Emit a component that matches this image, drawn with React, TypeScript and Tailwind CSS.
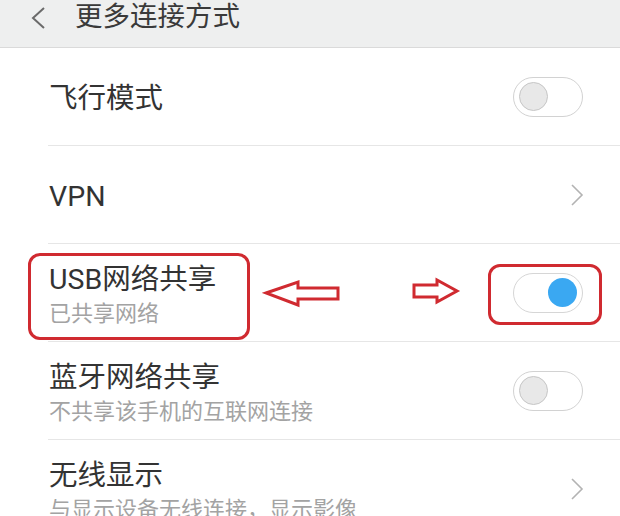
import React from 'react';

type Row = {
  title: string;
  subtitle?: string;
  kind: 'toggle' | 'arrow';
  on?: boolean;
};

const rows: Row[] = [
  { title: '飞行模式', kind: 'toggle' },
  { title: 'VPN', kind: 'arrow' },
  { title: 'USB网络共享', subtitle: '已共享网络', kind: 'toggle', on: true },
  { title: '蓝牙网络共享', subtitle: '不共享该手机的互联网连接', kind: 'toggle' },
  { title: '无线显示', subtitle: '与显示设备无线连接，显示影像', kind: 'arrow' },
];

const Toggle: React.FC<{ on?: boolean }> = ({ on }) => (
  <div
    className={`w-[70px] h-[40px] rounded-full border-[1.5px] bg-white flex items-center px-[5px] ${
      on ? 'border-[#d6d6d6] justify-end' : 'border-[#d2d2d2] justify-start'
    }`}
  >
    {on ? (
      <div className="w-[29px] h-[29px] rounded-full bg-[#3aa8f2]" />
    ) : (
      <div className="w-[29px] h-[29px] rounded-full bg-[#e8e8e8] border border-[#c6c6c6]" />
    )}
  </div>
);

const Chevron: React.FC = () => (
  <svg width="14" height="24" viewBox="0 0 14 24" className="mr-[-1px]">
    <polyline points="2,2 12,12 2,22" fill="none" stroke="#b3b3b3" strokeWidth="1.6" />
  </svg>
);

export default function App() {
  return (
    <div
      className="relative w-[620px] h-[516px] overflow-hidden bg-white"
      style={{ fontFamily: 'Roboto, "Noto Sans CJK SC", sans-serif' }}
    >
      {/* Header */}
      <div className="h-[48px] bg-[#eeefef] border-b border-[#dadada] flex items-start pt-[1px]">
        <svg width="16" height="22" viewBox="0 0 16 22" className="ml-[30px] mt-[6px]">
          <polyline points="14,1 3,11 14,21" fill="none" stroke="#6a6a6a" strokeWidth="2" />
        </svg>
        <span className="ml-[29px] text-[27.5px] leading-[32px] text-[#3a3a3a]">更多连接方式</span>
      </div>

      {/* List */}
      <div className="flex flex-col">
        {rows.map((row) => (
          <div
            key={row.title}
            className="ml-[48px] h-[98px] shrink-0 border-b border-[#e6e6e6] flex items-center pl-[1px] pr-[37px]"
          >
            <div className="flex-1 flex flex-col pt-[5px]">
              <span className="text-[28.5px] leading-[34px] text-[#333333]">{row.title}</span>
              {row.subtitle && (
                <span className="text-[22px] leading-[28px] mt-[3px] text-[#a3a3a3]">{row.subtitle}</span>
              )}
            </div>
            {row.kind === 'toggle' ? <Toggle on={row.on} /> : <Chevron />}
          </div>
        ))}
      </div>

      {/* Annotations */}
      <div className="absolute left-[28px] top-[253px] w-[222px] h-[87px] border-[3px] border-[#d02a30] rounded-[12px]" />
      <div className="absolute left-[488px] top-[264px] w-[114px] h-[61px] border-[3px] border-[#d02a30] rounded-[12px]" />
      <svg className="absolute left-[262px] top-[279px]" width="80" height="30" viewBox="0 0 80 30">
        <polygon
          points="4,14 36,3 36,9 76,9 76,20 36,20 36,26"
          fill="none"
          stroke="#d02a30"
          strokeWidth="3"
          strokeLinejoin="miter"
        />
      </svg>
      <svg className="absolute left-[411px] top-[277px]" width="50" height="30" viewBox="0 0 50 30">
        <polygon
          points="3,8 26,8 26,3 46,14 26,25 26,20 3,20"
          fill="none"
          stroke="#d02a30"
          strokeWidth="3"
          strokeLinejoin="miter"
        />
      </svg>
    </div>
  );
}
